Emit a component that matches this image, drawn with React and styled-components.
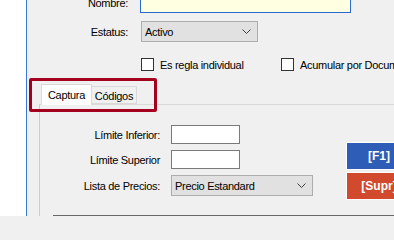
import React from 'react';
import styled, { createGlobalStyle } from 'styled-components';

const GlobalStyle = createGlobalStyle`
  body {
    margin: 0;
    background: #f0f0f0;
  }
`;

const Chevron = () => (
  <svg width="9" height="5" viewBox="0 0 9 5">
    <polyline points="0.5,0.5 4.5,4.5 8.5,0.5" fill="none" stroke="#404040" strokeWidth="1" />
  </svg>
);

const Field = ({ label, children }) => (
  <>
    <Label>{label}</Label>
    {children}
  </>
);

const App = () => (
  <>
    <GlobalStyle />
    <Screen>
      <Gutter />
      <Content>
        <TopForm>
          <Field label="Nombre:">
            <NameInput />
          </Field>
          <Field label="Estatus:">
            <Select width={117}>
              <span>Activo</span>
              <Chevron />
            </Select>
          </Field>
          <span />
          <CheckRow>
            <CheckItem width={140}>
              <Box />
              <span>Es regla individual</span>
            </CheckItem>
            <CheckItem>
              <Box />
              <span>Acumular por Documento</span>
            </CheckItem>
          </CheckRow>
        </TopForm>

        <TabControl>
          <Highlight />
          <TabStrip>
            <Tab active>Captura</Tab>
            <Tab>Códigos</Tab>
          </TabStrip>
          <Panel>
            <PanelRow>
              <FieldsGrid>
                <Field label="Límite Inferior:">
                  <TextBox />
                </Field>
                <Field label="Límite Superior">
                  <TextBox />
                </Field>
                <Field label="Lista de Precios:">
                  <Select width={142}>
                    <span>Precio Estandard</span>
                    <Chevron />
                  </Select>
                </Field>
              </FieldsGrid>
              <ButtonColumn>
                <ActionButton color="#2d5db6">[F1]</ActionButton>
                <ActionButton color="#d14a2d">[Supr]</ActionButton>
              </ButtonColumn>
            </PanelRow>
            <GridTop />
          </Panel>
        </TabControl>
      </Content>
    </Screen>
  </>
);

export default App;

const Screen = styled.div`
  width: 394px;
  height: 216px;
  overflow: hidden;
  display: flex;
  background: #f0f0f0;
  font-family: "Liberation Sans", Arial, sans-serif;
  font-size: 11px;
  letter-spacing: -0.3px;
  color: #000;
  white-space: nowrap;
`;

const Gutter = styled.div`
  flex: 0 0 26px;
  background: #fff;
  border-right: 1px solid #3a78d6;
`;

const Content = styled.div`
  flex: 1;
  min-width: 0;
  display: flex;
  flex-direction: column;
`;

const TopForm = styled.div`
  display: grid;
  grid-template-columns: 101px auto;
  column-gap: 13px;
  row-gap: 8px;
  align-items: center;
  margin-top: -8px;
`;

const Label = styled.div`
  text-align: right;
`;

const NameInput = styled.div`
  width: 209px;
  height: 19px;
  margin-left: -1px;
  background: #ffffe1;
  border: 1px solid #2a6ad0;
`;

const Select = styled.div`
  width: ${(p) => p.width - 2}px;
  height: 19px;
  box-sizing: content-box;
  display: flex;
  align-items: center;
  justify-content: space-between;
  padding: 0 6px 0 3px;
  margin-right: auto;
  box-sizing: border-box;
  width: ${(p) => p.width}px;
  height: 21px;
  background: #e1e1e1;
  border: 1px solid #adadad;
`;

const CheckRow = styled.div`
  display: flex;
  margin-top: 8px;
`;

const CheckItem = styled.label`
  display: flex;
  align-items: center;
  gap: 6px;
  width: ${(p) => (p.width ? `${p.width}px` : 'auto')};
  flex-shrink: 0;
`;

const Box = styled.span`
  width: 11px;
  height: 11px;
  background: #fff;
  border: 1px solid #333;
`;

const TabControl = styled.div`
  position: relative;
  margin: 13px 0 0 12px;
`;

const Highlight = styled.div`
  position: absolute;
  left: -10px;
  top: -6px;
  width: 122px;
  height: 28px;
  border: 3px solid #a6001f;
  border-radius: 2px;
  z-index: 2;
`;

const TabStrip = styled.div`
  display: flex;
  align-items: flex-end;
  height: 20px;
  padding-left: 2px;
`;

const Tab = styled.div`
  display: flex;
  align-items: center;
  justify-content: center;
  box-sizing: border-box;
  width: ${(p) => (p.active ? 51 : 45)}px;
  height: ${(p) => (p.active ? 21 : 18)}px;
  margin-bottom: ${(p) => (p.active ? -1 : 0)}px;
  background: ${(p) => (p.active ? '#fff' : '#f0f0f0')};
  border: 1px solid #d9d9d9;
  border-bottom: ${(p) => (p.active ? 'none' : '1px solid #d9d9d9')};
  border-left: ${(p) => (p.active ? '1px solid #d9d9d9' : 'none')};
  position: relative;
  z-index: ${(p) => (p.active ? 1 : 0)};
  padding-top: ${(p) => (p.active ? 0 : 1)}px;
`;

const Panel = styled.div`
  border-top: 1px solid #d9d9d9;
  border-left: 1px solid #cdcdcd;
  padding-top: 20px;
`;

const PanelRow = styled.div`
  display: flex;
  align-items: flex-start;
`;

const FieldsGrid = styled.div`
  display: grid;
  grid-template-columns: 120px auto;
  column-gap: 11px;
  row-gap: 6px;
  align-items: center;
`;

const TextBox = styled.div`
  width: 67px;
  height: 17px;
  background: #fff;
  border: 1px solid #7a7a7a;
`;

const ButtonColumn = styled.div`
  display: flex;
  flex-direction: column;
  gap: 2px;
  margin-left: 33px;
  padding-top: 17px;
`;

const ActionButton = styled.div`
  width: 64px;
  height: 26px;
  display: flex;
  align-items: center;
  justify-content: center;
  background: ${(p) => p.color};
  border: 1px solid #fff;
  color: #fff;
  font-size: 12px;
  font-weight: bold;
  letter-spacing: 0;
`;

const GridTop = styled.div`
  margin: 15px 0 0 13px;
  height: 10px;
  border-top: 1px solid #696969;
`;
